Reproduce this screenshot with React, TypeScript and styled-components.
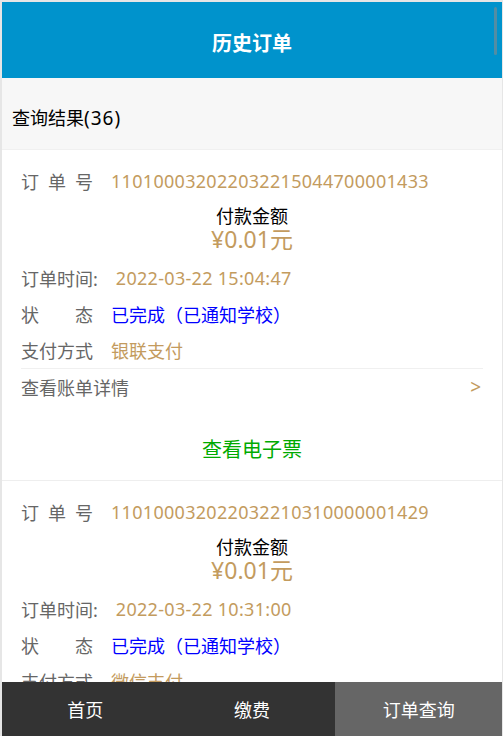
import styled, { createGlobalStyle } from 'styled-components';

interface Order {
  id: string;
  time: string;
  amount: string;
  status: string;
  payway: string;
}

const orders: Order[] = [
  {
    id: '110100032022032215044700001433',
    time: '2022-03-22 15:04:47',
    amount: '¥0.01元',
    status: '已完成（已通知学校）',
    payway: '银联支付',
  },
  {
    id: '110100032022032210310000001429',
    time: '2022-03-22 10:31:00',
    amount: '¥0.01元',
    status: '已完成（已通知学校）',
    payway: '微信支付',
  },
];

const tabs = ['首页', '缴费', '订单查询'];

const App = () => (
  <>
    <GlobalStyle />
    <Page>
      <Header>历史订单</Header>
      <ScrollThumb />
      <Content>
        <ResultBar>
          查询结果<Count>(36)</Count>
        </ResultBar>
        {orders.map((order) => (
          <Card key={order.id}>
            <InfoRow>
              <Label justify>订单号</Label>
              <Value latin>{order.id}</Value>
            </InfoRow>
            <Amount>
              <AmountTitle>付款金额</AmountTitle>
              <Price>{order.amount}</Price>
            </Amount>
            <InfoRow>
              <Label>订单时间:</Label>
              <Value latin>{order.time}</Value>
            </InfoRow>
            <InfoRow>
              <Label justify>状态</Label>
              <Value status>{order.status}</Value>
            </InfoRow>
            <InfoRow>
              <Label>支付方式</Label>
              <Value>{order.payway}</Value>
            </InfoRow>
            <DetailRow>
              <span>查看账单详情</span>
              <Arrow>&gt;</Arrow>
            </DetailRow>
            <TicketLink>查看电子票</TicketLink>
          </Card>
        ))}
      </Content>
      <TabBar>
        {tabs.map((tab, index) => (
          <Tab key={tab} active={index === 2}>
            {tab}
          </Tab>
        ))}
      </TabBar>
    </Page>
  </>
);

export default App;

const GlobalStyle = createGlobalStyle`
  * {
    box-sizing: border-box;
  }
  body {
    margin: 0;
    background: #ffffff;
    font-family: "Noto Sans", "Noto Sans CJK SC", sans-serif;
  }
`;

const Page = styled.div`
  position: relative;
  display: flex;
  flex-direction: column;
  height: 100vh;
  overflow: hidden;
  border-top: 2px solid #e6e6e6;
  border-left: 2px solid #e6e6e6;
  border-right: 1px solid #e6e6e6;
  background: #ffffff;
`;

const Header = styled.div`
  flex: none;
  display: flex;
  align-items: center;
  justify-content: center;
  height: 76px;
  padding-top: 4px;
  background: #0093cc;
  color: #ffffff;
  font-size: 20px;
  font-weight: bold;
`;

const ScrollThumb = styled.div`
  position: absolute;
  top: 5px;
  right: 5px;
  width: 3px;
  height: 48px;
  border-radius: 2px;
  background: rgba(136, 136, 136, 0.6);
`;

const Content = styled.div`
  flex: 1;
  overflow: hidden;
`;

const ResultBar = styled.div`
  height: 72px;
  padding: 22px 10px 0;
  line-height: 36px;
  background: #f7f7f7;
  border-bottom: 1px solid #f0f0f0;
  color: #000000;
  font-size: 18px;
`;

const Count = styled.span`
  letter-spacing: 1px;
  font-size: 19px;
`;

const Card = styled.div`
  padding: 13px 19px 12px;
  border-bottom: 1px solid #eeeeee;
`;

const InfoRow = styled.div`
  display: flex;
  align-items: center;
  height: 36px;
  font-size: 18px;
`;

const Label = styled.span<{ justify?: boolean }>`
  display: inline-block;
  width: ${({ justify }) => (justify ? '72px' : 'auto')};
  margin-right: 18px;
  color: #666666;
  text-align-last: ${({ justify }) => (justify ? 'justify' : 'auto')};
  white-space: nowrap;
`;

const Value = styled.span<{ status?: boolean; latin?: boolean }>`
  color: ${({ status }) => (status ? '#0000ff' : '#c39b5e')};
  letter-spacing: ${({ latin }) => (latin ? '0.3px' : '0')};
  white-space: nowrap;
`;

const Amount = styled.div`
  margin: 6px 0 9px;
  text-align: center;
`;

const AmountTitle = styled.div`
  line-height: 22px;
  color: #000000;
  font-size: 18px;
`;

const Price = styled.div`
  line-height: 24px;
  color: #c39b5e;
  font-size: 23px;
`;

const DetailRow = styled.div`
  display: flex;
  align-items: center;
  justify-content: space-between;
  height: 37px;
  border-top: 1px solid #f0f0f0;
  color: #666666;
  font-size: 18px;
`;

const Arrow = styled.span`
  padding-right: 2px;
  color: #c39b5e;
  font-size: 19px;
`;

const TicketLink = styled.div`
  margin-top: 27px;
  line-height: 36px;
  color: #00aa00;
  font-size: 20px;
  text-align: center;
`;

const TabBar = styled.div`
  flex: none;
  display: grid;
  grid-template-columns: repeat(3, 1fr);
  height: 54px;
  background: #333333;
`;

const Tab = styled.div<{ active?: boolean }>`
  display: flex;
  align-items: center;
  justify-content: center;
  background: ${({ active }) => (active ? '#666666' : 'transparent')};
  color: #ffffff;
  font-size: 18px;
`;
